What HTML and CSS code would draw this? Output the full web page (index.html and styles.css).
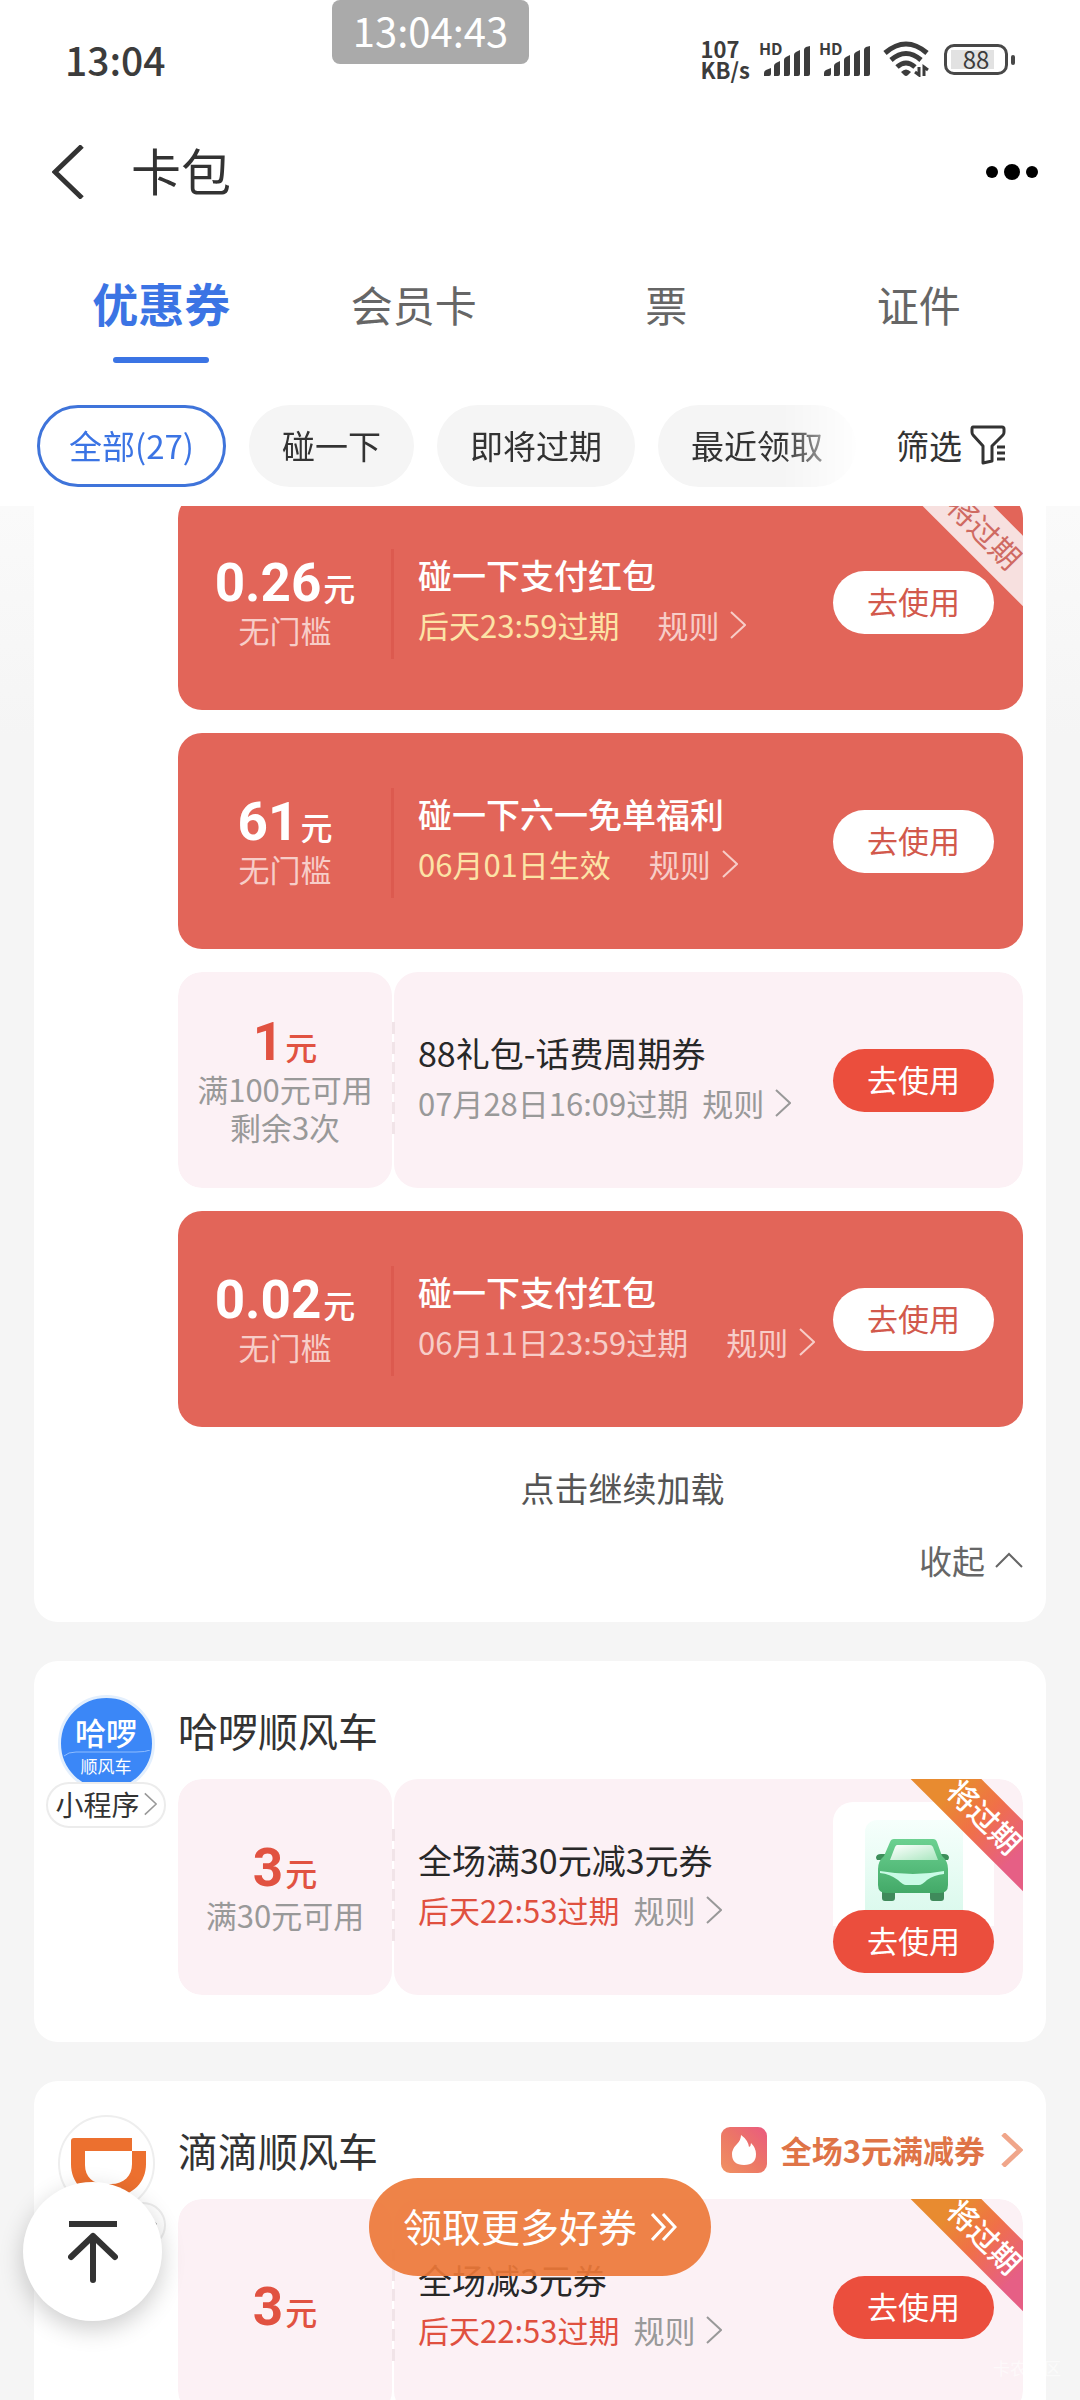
FILE: index.html
```html
<!DOCTYPE html>
<html lang="zh-CN">
<head>
<meta charset="utf-8">
<meta name="viewport" content="width=device-width, initial-scale=1">
<title>卡包</title>
<link rel="stylesheet" href="styles.css">
</head>
<body>
<svg class="defs" aria-hidden="true">
  <symbol id="right" viewBox="0 0 16 28"><path d="M1 1l14 13L1 27" fill="none" stroke="currentColor" stroke-width="2"/></symbol>
  <symbol id="signal" viewBox="0 0 46 30"><path d="M0 30v-3q0-2 2-3l5-2v6q0 2-2 2zM10 20q0-2 2-3l4-2v13q0 2-2 2h-4zM20 14q0-2 2-3l4-2v19q0 2-2 2h-4zM30 9q0-2 2-3l4-2v24q0 2-2 2h-4zM40 4q0-2 2-3l4-1v28q0 2-2 2h-4z" fill="currentColor"/></symbol>
</svg>
<div class="app">
  <header>
    <div class="status">
      <span class="clock">13:04</span>
      <div class="status-icons">
        <span class="speed">107<br>KB/s</span>
        <span class="sim"><b>HD</b><svg width="46" height="30"><use href="#signal"/></svg></span>
        <span class="sim"><b>HD</b><svg width="46" height="30"><use href="#signal"/></svg></span>
        <svg class="wifi" width="46" height="36" viewBox="0 0 46 36">
          <g fill="none" stroke="currentColor" stroke-width="5"><path d="M2 12Q23-6 44 12"/><path d="M8 19Q23 6 38 19"/><path d="M14 26q9-8 18 0"/></g>
          <path d="M18 31q5-5 10 0l-3 3q-2 2-4 0z" fill="currentColor"/>
          <path d="M32 31l4 3v-8M45 29l-4-3v9" fill="none" stroke="currentColor" stroke-width="3"/>
        </svg>
        <span class="battery">88</span>
      </div>
    </div>
    <nav class="titlebar">
      <button class="plain" aria-label="返回"><svg width="32" height="54" viewBox="0 0 32 54"><path d="M30 1L3 27l27 26" fill="none" stroke="currentColor" stroke-width="5"/></svg></button>
      <h1>卡包</h1>
      <button class="plain more" aria-label="更多"><svg width="52" height="16" viewBox="0 0 52 16"><circle cx="6" cy="8" r="6"/><circle cx="26" cy="8" r="8"/><circle cx="46" cy="8" r="6"/></svg></button>
    </nav>
    <nav class="tabs">
      <a href="#" class="active">优惠券</a><a href="#">会员卡</a><a href="#">票</a><a href="#">证件</a>
    </nav>
    <div class="filters">
      <div class="chips">
        <button class="chip selected">全部(27)</button><button class="chip">碰一下</button><button class="chip">即将过期</button><button class="chip">最近领取</button>
      </div>
      <button class="plain filter">筛选<svg width="36" height="40" viewBox="0 0 36 40"><path d="M3 2h29q2 0 2 2v3q0 2-1 3L22 21v15l-9 2V21L3 10Q2 9 2 7V4q0-2 1-2z" fill="none" stroke="currentColor" stroke-width="3" stroke-linejoin="round"/><path d="M27 22h8M27 28h8M27 34h8" stroke="currentColor" stroke-width="3"/></svg></button>
    </div>
  </header>

  <main>
    <section class="shop first">
      <div class="body">
        <article class="coupon red">
          <div class="value"><p class="amount"><b>0.26</b>元</p><p class="limit">无门槛</p></div>
          <div class="info"><h3>碰一下支付红包</h3><p class="when"><span class="soon">后天23:59过期</span><a href="#">规则<svg width="16" height="28"><use href="#right"/></svg></a></p></div>
          <button class="use">去使用</button>
          <span class="ribbon">将过期</span>
        </article>
        <article class="coupon red">
          <div class="value"><p class="amount"><b>61</b>元</p><p class="limit">无门槛</p></div>
          <div class="info"><h3>碰一下六一免单福利</h3><p class="when"><span class="soon">06月01日生效</span><a href="#">规则<svg width="16" height="28"><use href="#right"/></svg></a></p></div>
          <button class="use">去使用</button>
        </article>
        <article class="coupon pink">
          <div class="value"><p class="amount"><b>1</b>元</p><p class="limit">满100元可用<br>剩余3次</p></div>
          <div class="info"><h3>88礼包-话费周期券</h3><p class="when"><span>07月28日16:09过期</span><a href="#">规则<svg width="16" height="28"><use href="#right"/></svg></a></p></div>
          <button class="use">去使用</button>
        </article>
        <article class="coupon red">
          <div class="value"><p class="amount"><b>0.02</b>元</p><p class="limit">无门槛</p></div>
          <div class="info"><h3>碰一下支付红包</h3><p class="when"><span>06月11日23:59过期</span><a href="#">规则<svg width="16" height="28"><use href="#right"/></svg></a></p></div>
          <button class="use">去使用</button>
        </article>
        <button class="plain load">点击继续加载</button>
        <button class="plain fold">收起<svg width="28" height="16" viewBox="0 0 28 16"><path d="M1 15L14 2l13 13" fill="none" stroke="currentColor" stroke-width="2"/></svg></button>
      </div>
    </section>

    <section class="shop">
      <div class="brand">
        <span class="logo hello"><b>哈啰</b><svg width="92" height="7" viewBox="0 0 92 7"><path d="M4 6q4-4 12-4h60q10 0 14-2" fill="none" stroke="#8fbdff"/></svg><small>顺风车</small></span>
        <a href="#" class="mini">小程序<svg width="13" height="24"><use href="#right"/></svg></a>
      </div>
      <div class="body">
        <div class="shop-head"><h2>哈啰顺风车</h2></div>
        <article class="coupon pink">
          <div class="value"><p class="amount"><b>3</b>元</p><p class="limit">满30元可用</p></div>
          <div class="info"><h3>全场满30元减3元券</h3><p class="when"><span class="soon">后天22:53过期</span><a href="#">规则<svg width="16" height="28"><use href="#right"/></svg></a></p></div>
          <div class="goods">
            <div class="photo">
              <svg width="98" height="110" viewBox="0 0 98 110">
                <defs>
                  <linearGradient id="mint" x2="0" y2="1"><stop offset="0" stop-color="#f6fffc"/><stop offset="1" stop-color="#d6f8ea"/></linearGradient>
                  <linearGradient id="car" x2="0" y2="1"><stop offset="0" stop-color="#6cd191"/><stop offset="1" stop-color="#43a968"/></linearGradient>
                  <linearGradient id="glass" x2="1" y2="1"><stop offset="0" stop-color="#fff"/><stop offset="1" stop-color="#a9e6bf"/></linearGradient>
                </defs>
                <rect width="98" height="110" rx="12" fill="url(#mint)"/>
                <path d="M11 38q0-4 5-4h7v6H12zM84 38q0-4-5-4h-7v6h11z" fill="#3d8f5b"/>
                <path d="M17 68h13v10q0 3-3 3h-7q-3 0-3-3zM65 68h14v10q0 3-3 3h-8q-3 0-3-3z" fill="#3f8a5b"/>
                <path d="M29 19h39q3 0 4 3l5 14q6 5 6 13v16q0 8-8 8H21q-8 0-8-8V49q0-8 6-13l6-14q1-3 4-3z" fill="url(#car)"/>
                <path d="M32 25h33q2 0 3 2l5 13H25l5-13q1-2 2-2z" fill="url(#glass)"/>
                <path d="M15 51q34 6 64 0v3q-10 1-17 6-5 5-8 5H41q-3 0-8-5-8-6-18-7z" fill="#c9fbe6"/>
              </svg>
            </div>
            <button class="use">去使用</button>
          </div>
          <span class="ribbon">将过期</span>
        </article>
      </div>
    </section>

    <section class="shop">
      <div class="brand">
        <span class="logo"><svg width="82" height="64" viewBox="-6 -6 82 64"><path d="M3 0h58v13h14v13C75 44 62 58 43 58H34C13 58 0 45 0 26V3Q0 0 3 0zM14 13v14c0 12 8 19 20 19h6c13 0 21-8 21-20V13z" fill="#ec702f" fill-rule="evenodd"/></svg></span>
        <a href="#" class="mini">小程序<svg width="13" height="24"><use href="#right"/></svg></a>
      </div>
      <div class="body">
        <div class="shop-head">
          <h2>滴滴顺风车</h2>
          <a href="#" class="promo">
            <svg width="46" height="46" viewBox="0 0 46 46"><defs><linearGradient id="hot" x1="0" y1="1" x2="1" y2="0"><stop offset="0" stop-color="#f09262"/><stop offset=".5" stop-color="#ec7766"/><stop offset="1" stop-color="#ea5a80"/></linearGradient></defs><rect width="46" height="46" rx="9" fill="url(#hot)"/><path d="M20 8q7 5 8 12 2-1 2-4 5 5 5 11 0 11-12 11T11 27q0-5 5-10 4-4 4-9z" fill="#fff"/></svg>
            全场3元满减券
            <svg class="go" width="22" height="34" viewBox="0 0 22 34"><path d="M2 1l17 16L2 33" fill="none" stroke="#f0a68a" stroke-width="5"/></svg>
          </a>
        </div>
        <article class="coupon pink">
          <div class="value"><p class="amount"><b>3</b>元</p></div>
          <div class="info"><h3>全场减3元券</h3><p class="when"><span class="soon">后天22:53过期</span><a href="#">规则<svg width="16" height="28"><use href="#right"/></svg></a></p></div>
          <button class="use">去使用</button>
          <span class="ribbon">将过期</span>
        </article>
      </div>
    </section>
  </main>

  <div class="toast">13:04:43</div>
  <button class="totop" aria-label="回到顶部"><svg width="50" height="62" viewBox="0 0 50 62"><path d="M1 3h48" stroke="currentColor" stroke-width="6"/><path d="M25 59V15M3 36l22-21 22 21" fill="none" stroke="currentColor" stroke-width="6" stroke-linecap="round" stroke-linejoin="round"/></svg></button>
  <button class="claim">领取更多好券<svg width="26" height="28" viewBox="0 0 26 28"><path d="M1 1l12 13L1 27M12 1l12 13-12 13" fill="none" stroke="currentColor" stroke-width="3"/></svg></button>
  <span class="mark">卡农社区</span>
</div>
</body>
</html>
```
FILE: styles.css
```css
* { box-sizing: border-box; }
body, h1, h2, h3, p { margin: 0; font-weight: 400; }
body { font-family: "Noto Sans CJK SC", sans-serif; color: #333; background: #f5f5f5; }
a { color: inherit; text-decoration: none; }
svg { display: block; flex: none; }
button { font-family: inherit; border: 0; padding: 0; margin: 0; white-space: nowrap; }
.plain { background: none; color: inherit; }
.defs { position: absolute; width: 0; height: 0; }

.app { position: relative; height: 100vh; display: flex; flex-direction: column; overflow: hidden; }
header { background: #fff; flex: none; }

.status { display: flex; justify-content: space-between; align-items: center; height: 118px; padding: 0 66px 0 65px; color: #3c3c3c; }
.clock { font-size: 39px; font-weight: 500; }
.status-icons { display: flex; align-items: center; gap: 9px; }
.speed { font-size: 22px; line-height: 21px; font-weight: 700; }
.sim { position: relative; padding: 3px 0 0 5px; }
.sim b { position: absolute; left: 0; top: -7px; font-size: 16px; line-height: 24px; }
.wifi { margin: 0 6px 0 4px; }
.battery { position: relative; width: 64px; height: 31px; border: 3px solid #484848; border-radius: 10px; margin-right: 6px; font-size: 24px; line-height: 24px; text-align: center; background: linear-gradient(#e2e2e2, #e2e2e2) 4px 3px / 43px 19px no-repeat; }
.battery::after { content: ""; position: absolute; right: -10px; top: 8px; width: 4px; height: 10px; border-radius: 2px; background: #484848; }

.titlebar { display: flex; align-items: center; height: 108px; padding: 0 42px 0 52px; }
.titlebar h1 { flex: 1; margin-left: 47px; padding-bottom: 6px; font-size: 50px; line-height: 60px; }
.more { color: #000; }

.tabs { display: flex; height: 159px; padding: 0 35px; }
.tabs a { position: relative; flex: 1; text-align: center; font-size: 42px; line-height: 156px; color: #666; }
.tabs .active { font-size: 46px; line-height: 152px; font-weight: 700; color: #3b74e4; }
.active::after { content: ""; position: absolute; left: 50%; bottom: 22px; width: 96px; margin-left: -48px; height: 6px; border-radius: 3px; background: #3b74e4; }

.filters { display: flex; align-items: center; padding: 20px 0 19px 37px; }
.chips { display: flex; gap: 23px; -webkit-mask-image: linear-gradient(90deg, #000 91%, transparent 101%); mask-image: linear-gradient(90deg, #000 91%, transparent 101%); }
.chip { height: 82px; padding: 0 33px 2px; border-radius: 41px; background: #f5f5f5; color: #333; font-size: 33px; }
.selected { border: 3px solid #3f74da; padding: 0 29px 2px; background: #fff; color: #3b74e4; }
.filter { display: flex; align-items: center; gap: 8px; margin-left: 40px; padding-bottom: 2px; font-size: 33px; }

main { flex: 1; min-height: 0; overflow: auto; scrollbar-width: none; padding: 0 34px; background: linear-gradient(#fafafa, #f5f5f5 230px); }
.shop { display: flex; background: #fff; border-radius: 24px; padding-right: 23px; margin-bottom: 39px; }
.first { margin-top: -12px; padding-left: 144px; border-radius: 0 0 24px 24px; }
.body { flex: 1; min-width: 0; display: flex; flex-direction: column; padding-bottom: 47px; }
.first .body { gap: 23px; padding-bottom: 38px; }
.brand { width: 144px; flex: none; display: flex; flex-direction: column; align-items: center; padding-top: 34px; }
.shop-head { display: flex; justify-content: space-between; align-items: center; height: 118px; padding-top: 20px; }
.shop-head h2 { font-size: 40px; line-height: 60px; }

.logo { display: flex; flex-direction: column; align-items: center; justify-content: center; width: 97px; height: 97px; border: 2px solid #eee; border-radius: 50%; background: #fff; }
.hello { background: #3b87f7; border: 3px solid #e3effd; justify-content: flex-start; padding-top: 16px; color: #fff; }
.hello b { font-size: 31px; line-height: 36px; font-weight: 500; }
.hello small { font-size: 17px; line-height: 18px; }
.mini { display: flex; align-items: center; gap: 4px; height: 46px; margin-top: -10px; padding: 0 7px 2px; border: 2px solid #ececec; border-radius: 23px; background: #fff; font-size: 28px; line-height: 40px; }
.mini svg { color: #999; }

.coupon { position: relative; display: flex; align-items: center; height: 216px; padding-right: 29px; border-radius: 24px; overflow: hidden; }
.value { position: relative; flex: none; width: 214px; height: 100%; display: flex; flex-direction: column; justify-content: center; text-align: center; }
.amount { font-size: 32px; line-height: 64px; margin-bottom: -8px; font-weight: 500; }
.amount b { font-family: Roboto, sans-serif; font-size: 53px; line-height: 40px; margin-right: 2px; }
.limit { font-size: 31px; line-height: 38px; }
.info { flex: 1; min-width: 0; padding: 0 0 4px 26px; white-space: nowrap; }
.info h3 { font-size: 34px; line-height: 50px; font-weight: 500; }
.when { display: flex; font-size: 31px; line-height: 50px; }
.when a { display: flex; align-items: center; gap: 11px; margin-left: 14px; }
.use { flex: none; width: 161px; height: 63px; padding-bottom: 3px; border-radius: 32px; font-size: 31px; }

.red { background: #e26559; color: #fff; }
.red .value::after { content: ""; position: absolute; right: -2px; top: 55px; bottom: 51px; width: 3px; background: #dc5a4f; }
.red .limit, .red .when { color: #f7cdc8; }
.red .soon { color: #fce3a6; }
.red .when a { margin-left: 38px; }
.red .use { background: #fff; color: #d2594c; }

.pink { gap: 2px; padding-right: 0; }
.pink .value, .pink .info { background: #fcf1f5; border-radius: 24px; }
.pink .value::after { content: ""; position: absolute; right: -3px; top: 50px; bottom: 50px; width: 3px; background: repeating-linear-gradient(#f1e4e8 0 12px, transparent 12px 20px); }
.pink .info { height: 100%; padding-left: 24px; display: flex; flex-direction: column; justify-content: center; }
.pink .use { background: #eb4e3d; color: #fff; }
.pink > .use, .goods { margin: 0 29px 0 -192px; position: relative; }
.pink .amount { color: #e15241; }
.pink .info h3 { font-weight: 400; color: #282828; }
.pink .limit, .pink .when { color: #999; }
.pink .soon { color: #e0503f; }

.goods { flex: none; width: 161px; }
.photo { height: 124px; margin-bottom: -16px; padding: 18px 32px 0; border-radius: 20px 20px 0 0; background: #fff; overflow: hidden; }
.goods .use { position: relative; display: block; }

.ribbon { position: absolute; top: 13px; right: -61px; width: 200px; height: 50px; transform: rotate(45deg); text-align: center; font-size: 30px; line-height: 46px; font-weight: 500; background: linear-gradient(90deg, #e88b30 30%, #f07048 50%, #e65f85 75%); color: #fff; }
.red .ribbon { background: #f7e0df; color: #cf6a62; font-weight: 400; }

.load { align-self: center; margin: 14px 0 0 44px; font-size: 34px; line-height: 48px; color: #555; }
.fold { align-self: flex-end; display: flex; align-items: center; gap: 10px; margin-top: 1px; font-size: 33px; line-height: 48px; color: #666; }
.promo { display: flex; align-items: center; gap: 14px; font-size: 31px; line-height: 48px; font-weight: 700; color: #df7447; }
.go { margin-left: 2px; }

.toast { position: absolute; top: 0; left: 332px; width: 197px; height: 64px; border-radius: 8px; background: #aaa; color: #fff; font-size: 40px; line-height: 60px; text-align: center; }
.totop { position: absolute; left: 23px; bottom: 79px; width: 139px; height: 139px; border-radius: 50%; background: #fff; color: #333; display: flex; align-items: center; justify-content: center; box-shadow: 0 8px 24px rgba(0, 0, 0, .2); }
.claim { position: absolute; left: 50%; bottom: 124px; transform: translateX(-50%); display: flex; align-items: center; gap: 14px; height: 98px; padding: 0 34px 4px; border-radius: 49px; background: rgba(237, 120, 56, .92); color: #fff; font-size: 39px; }
.claim svg { margin-top: 4px; }
.mark { position: absolute; right: 19px; bottom: 20px; font-size: 17px; line-height: 24px; color: rgba(255, 255, 255, .6); }
```
